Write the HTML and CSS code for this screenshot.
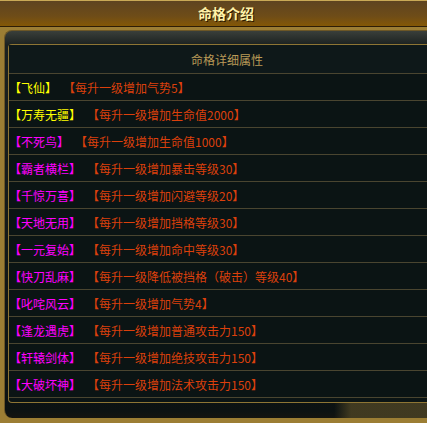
FILE: index.html
```html
<!DOCTYPE html>
<html lang="zh-CN">
<head>
  <meta charset="UTF-8">
  <title>命格介绍</title>
  <link rel="stylesheet" href="styles.css">
</head>
<body>
  <div class="titlebar">命格介绍</div>

  <div class="panel">
    <div class="table">
      <div class="row head">命格详细属性</div>
      <div class="row"><span class="name yellow">【飞仙】</span><span class="desc">【每升一级增加气势5】</span></div>
      <div class="row"><span class="name yellow">【万寿无疆】</span><span class="desc">【每升一级增加生命值2000】</span></div>
      <div class="row"><span class="name pink">【不死鸟】</span><span class="desc">【每升一级增加生命值1000】</span></div>
      <div class="row"><span class="name pink">【霸者横栏】</span><span class="desc">【每升一级增加暴击等级30】</span></div>
      <div class="row"><span class="name pink">【千惊万喜】</span><span class="desc">【每升一级增加闪避等级20】</span></div>
      <div class="row"><span class="name pink">【天地无用】</span><span class="desc">【每升一级增加挡格等级30】</span></div>
      <div class="row"><span class="name pink">【一元复始】</span><span class="desc">【每升一级增加命中等级30】</span></div>
      <div class="row"><span class="name pink">【快刀乱麻】</span><span class="desc">【每升一级降低被挡格（破击）等级40】</span></div>
      <div class="row"><span class="name pink">【叱咤风云】</span><span class="desc">【每升一级增加气势4】</span></div>
      <div class="row"><span class="name pink">【逢龙遇虎】</span><span class="desc">【每升一级增加普通攻击力150】</span></div>
      <div class="row"><span class="name pink">【轩辕剑体】</span><span class="desc">【每升一级增加绝技攻击力150】</span></div>
      <div class="row"><span class="name pink">【大破坏神】</span><span class="desc">【每升一级增加法术攻击力150】</span></div>
    </div>
  </div>
</body>
</html>
```

FILE: styles.css
```css
body {
  margin: 0;
  width: 427px;
  height: 423px;
  overflow: hidden;
  background-color: #9c7e34;
  font-family: "Noto Sans CJK SC", "Liberation Sans", sans-serif;
  font-size: 12px;
}

.titlebar {
  height: 25px;
  line-height: 25px;
  border-top: 1px solid #c9a956;
  border-bottom: 1px solid #2e1e06;
  margin-bottom: 3px;
  padding-left: 25px;
  text-align: center;
  font-size: 14px;
  font-weight: bold;
  color: #fff2a8;
  text-shadow: 1px 1px 0 #2a1800;
  background: linear-gradient(#5e4420, #6e4c18 60%, #845806);
}

.panel {
  height: 374px;
  margin-left: 4px;
  padding-top: 13px;
  border-top: 1px solid #6d5726;
  border-left: 1px solid #6d5726;
  border-radius: 8px 0 0 8px;
  background:
    linear-gradient(90deg, transparent 0 78%, rgba(70, 62, 34, 0.9) 82% 100%) bottom / 100% 16px no-repeat,
    linear-gradient(#3a3f3a, #1b2120 14px, #0c1212 380px, #141410);
}

.table {
  margin-left: 3px;
  height: 357px;
  border-top: 1px solid #8e7534;
  border-left: 1px solid #8e7534;
  border-bottom: 1px solid #8e7534;
  border-radius: 4px 0 0 4px;
  background-color: #0b1414;
}

.row {
  display: flex;
  align-items: center;
  height: 26px;
  padding-left: 0;
  border-bottom: 1px solid #4a4530;
  white-space: nowrap;
}

.row.head {
  height: 28px;
  justify-content: center;
  padding-left: 18px;
  color: #b99a57;
  background-color: #0e1819;
}

.name {
  margin-right: 6px;
}

.yellow {
  color: #ffff00;
}

.pink {
  color: #ff00ff;
}

.desc {
  color: #dc400c;
}
```
